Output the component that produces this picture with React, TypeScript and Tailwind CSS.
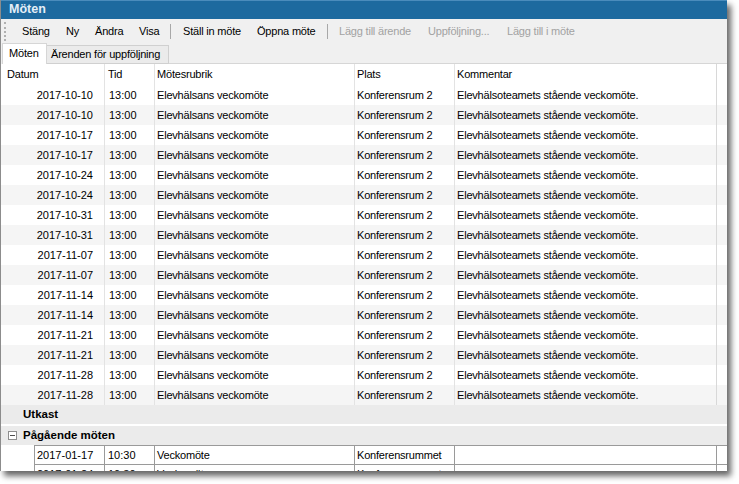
const dates = [
  "2017-10-10",
  "2017-10-10",
  "2017-10-17",
  "2017-10-17",
  "2017-10-24",
  "2017-10-24",
  "2017-10-31",
  "2017-10-31",
  "2017-11-07",
  "2017-11-07",
  "2017-11-14",
  "2017-11-14",
  "2017-11-21",
  "2017-11-21",
  "2017-11-28",
  "2017-11-28",
];

const ongoing = [
  { date: "2017-01-17", time: "10:30", title: "Veckomöte", place: "Konferensrummet" },
  { date: "2017-01-24", time: "10:30", title: "Veckomöte", place: "Konferensrummet" },
];

const ToolButton = ({
  label,
  width,
  disabled,
}: {
  label: string;
  width: string;
  disabled?: boolean;
}) => (
  <span
    className={`${width} shrink-0 whitespace-nowrap ${
      disabled ? "text-[#a2a2a2]" : "text-black"
    }`}
  >
    {label}
  </span>
);

const Separator = ({ width }: { width: string }) => (
  <span className={`${width} flex h-full shrink-0 items-center`}>
    <span className="h-[15px] w-px bg-[#a8a8a8]" />
  </span>
);

const App = () => {
  return (
    <div className="h-[484px] w-[739px] overflow-hidden bg-white font-['Liberation_Sans',Arial,sans-serif] text-[11px] tracking-[-0.2px] text-black">
      <div className="flex h-[471px] w-[727px] flex-col overflow-hidden border-l border-[#8c8c8c] bg-white shadow-[4px_5px_6px_rgba(0,0,0,0.6)]">
        {/* title */}
        <div className="h-[19px] shrink-0 border-t border-[#4a8cbc] bg-[#1d6a9f] pl-[8px] text-[12.5px] font-bold leading-[17px] tracking-normal text-[#e4eef7]">
          Möten
        </div>

        {/* toolbar */}
        <div className="flex h-[24px] shrink-0 items-center bg-[#f0f0f0] leading-[24px]">
          <span className="flex h-full w-[21px] shrink-0 items-center pl-[3px]">
            <span className="h-[19px] border-l-2 border-dotted border-[#b0b0b0]" />
          </span>
          <ToolButton label="Stäng" width="w-[44px]" />
          <ToolButton label="Ny" width="w-[29px]" />
          <ToolButton label="Ändra" width="w-[44px]" />
          <ToolButton label="Visa" width="w-[31px]" />
          <Separator width="w-[13px]" />
          <ToolButton label="Ställ in möte" width="w-[74px]" />
          <ToolButton label="Öppna möte" width="w-[70px]" />
          <Separator width="w-[12px]" />
          <ToolButton label="Lägg till ärende" width="w-[89px]" disabled />
          <ToolButton label="Uppföljning..." width="w-[79px]" disabled />
          <ToolButton label="Lägg till i möte" width="w-[90px]" disabled />
        </div>

        {/* tabs */}
        <div className="flex h-[21px] shrink-0 items-end bg-[#f0f0f0]">
          <div className="ml-[1px] h-[21px] w-[45px] border-x border-t border-[#d6d6d6] bg-white pl-[6px] leading-[19px]">
            Möten
          </div>
          <div className="h-[19px] w-[122px] border-y border-r border-[#d0d0d0] bg-[#ebebeb] pl-[4px] leading-[17px]">
            Ärenden för uppföljning
          </div>
          <div className="h-px flex-1 bg-[#d6d6d6]" />
        </div>

        {/* table */}
        <div className="flex-1 overflow-hidden bg-white">
          <div className="flex h-[21px] leading-[21px]">
            <div className="w-[104px] shrink-0 border-r border-[#e3e3e3] pl-[6px]">Datum</div>
            <div className="w-[50px] shrink-0 border-r border-[#e3e3e3] pl-[3px]">Tid</div>
            <div className="w-[200px] shrink-0 border-r border-[#e3e3e3] pl-[2px]">Mötesrubrik</div>
            <div className="w-[100px] shrink-0 border-r border-[#e3e3e3] pl-[2px]">Plats</div>
            <div className="w-[262px] shrink-0 border-r border-[#d8d8d8] pl-[2px]">Kommentar</div>
          </div>

          {dates.map((d, i) => (
            <div
              key={i}
              className={`flex h-[20px] leading-[20px] ${i % 2 ? "bg-[#f5f5f5]" : "bg-white"}`}
            >
              <div className="w-[104px] shrink-0 border-r border-[#e3e3e3] pr-[11px] text-right tracking-normal">
                {d}
              </div>
              <div className="w-[50px] shrink-0 border-r border-[#e3e3e3] pl-[4px] tracking-normal">
                13:00
              </div>
              <div className="w-[200px] shrink-0 border-r border-[#e3e3e3] pl-[2px]">
                Elevhälsans veckomöte
              </div>
              <div className="w-[100px] shrink-0 border-r border-[#e3e3e3] pl-[2px]">
                Konferensrum 2
              </div>
              <div className="w-[262px] shrink-0 border-r border-[#d8d8d8] pl-[2px]">
                Elevhälsoteamets stående veckomöte.
              </div>
            </div>
          ))}

          <div className="h-[19px] bg-[#ebebeb] pl-[22px] text-[11.5px] font-bold leading-[19px] tracking-normal">
            Utkast
          </div>
          <div className="mt-[2px] flex h-[19px] items-center bg-[#ebebeb] text-[11.5px] font-bold leading-[19px] tracking-normal">
            <span className="ml-[7px] mr-[6px] flex h-[9px] w-[9px] items-center justify-center border border-[#8e8e8e] bg-white">
              <span className="h-px w-[5px] bg-[#4d4d4d]" />
            </span>
            Pågående möten
          </div>

          {ongoing.map((r, i) => (
            <div key={i} className="flex h-[19px] leading-[18px]">
              <div className="w-[33px] shrink-0" />
              <div className="w-[71px] shrink-0 border-x border-t border-[#9a9a9a] pl-[2px] tracking-normal">
                {r.date}
              </div>
              <div className="w-[50px] shrink-0 border-r border-t border-[#9a9a9a] pl-[3px] tracking-normal">
                {r.time}
              </div>
              <div className="w-[200px] shrink-0 border-r border-t border-[#9a9a9a] pl-[2px]">
                {r.title}
              </div>
              <div className="w-[100px] shrink-0 border-r border-t border-[#9a9a9a] pl-[2px]">
                {r.place}
              </div>
              <div className="w-[262px] shrink-0 border-r border-t border-[#9a9a9a]" />
              <div className="flex-1 border-t border-[#9a9a9a]" />
            </div>
          ))}
        </div>
      </div>
    </div>
  );
};

export default App;
